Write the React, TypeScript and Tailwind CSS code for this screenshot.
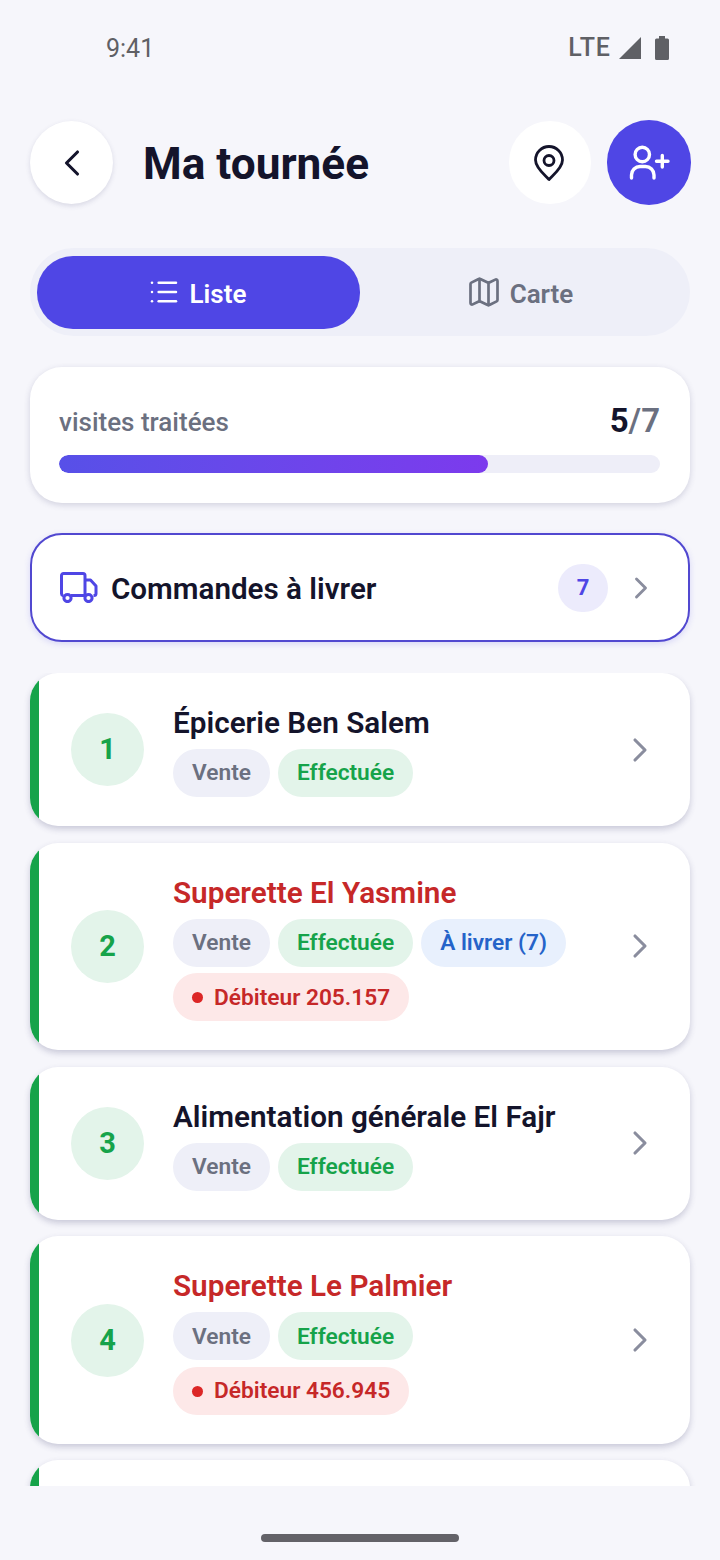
import { ChevronLeft, ChevronRight, List, Map } from "lucide-react";

type Stop = {
  num: number;
  name: string;
  late?: boolean;
  toDeliver?: number;
  debt?: string;
};

const stops: Stop[] = [
  { num: 1, name: "Épicerie Ben Salem" },
  { num: 2, name: "Superette El Yasmine", late: true, toDeliver: 7, debt: "205.157" },
  { num: 3, name: "Alimentation générale El Fajr" },
  { num: 4, name: "Superette Le Palmier", late: true, debt: "456.945" },
];

function Badge({ className, children }: { className: string; children: React.ReactNode }) {
  return (
    <span className={`flex h-[48px] items-center rounded-full px-[19px] pt-[1px] text-[22.7px] font-semibold ${className}`}>
      {children}
    </span>
  );
}

function StopCard({ stop }: { stop: Stop }) {
  return (
    <div className="flex shrink-0 overflow-hidden rounded-[28px] bg-white shadow-[0_3px_6px_rgba(60,60,110,0.24)]">
      <div className="w-[9px] shrink-0 bg-[#16a34a]" />
      <div className="flex min-w-0 flex-1 items-center pl-[32px] pr-[30px]">
        <div className="flex h-[73px] w-[73px] shrink-0 items-center justify-center rounded-full bg-[#e3f4ea] pt-[1px] text-[29px] font-bold text-[#16a34a]">
          {stop.num}
        </div>
        <div className="min-w-0 flex-1 pb-[29px] pl-[29px] pt-[32px]">
          <div className={`h-[44px] text-[29.7px] leading-[36px] font-semibold ${stop.late ? "text-[#c62828]" : "text-[#14142b]"}`}>
            {stop.name}
          </div>
          <div className="flex flex-wrap gap-x-[8px] gap-y-[6.5px]">
            <Badge className="bg-[#eeeff8] text-[#6b7080]">Vente</Badge>
            <Badge className="bg-[#e3f4ea] text-[#16a34a]">Effectuée</Badge>
            {stop.toDeliver ? (
              <Badge className="bg-[#e8f0fd] text-[#2563c9]">À livrer ({stop.toDeliver})</Badge>
            ) : null}
            {stop.debt ? (
              <Badge className="bg-[#fde8e8] text-[#c62828]">
                <span className="mr-[11px] h-[11px] w-[11px] rounded-full bg-[#dc2626]" />
                Débiteur {stop.debt}
              </Badge>
            ) : null}
          </div>
        </div>
        <ChevronRight className="h-[40px] w-[40px] shrink-0 text-[#8a8d9e]" strokeWidth={1.9} />
      </div>
    </div>
  );
}

export default function App() {
  return (
    <div className="flex h-[1560px] w-[720px] flex-col overflow-hidden bg-[#f6f6fb] font-['Roboto',sans-serif]">
      <div className="flex h-[96px] items-center justify-between pl-[106px] pr-[51px] text-[#5f6065]">
        <span className="pt-[2px] text-[25px]">9:41</span>
        <div className="flex items-center">
          <span className="text-[25px] font-medium tracking-[1px]">LTE</span>
          <svg className="ml-[8px] h-[22px] w-[22px]" viewBox="0 0 24 24" fill="currentColor">
            <path d="M24 0v24H0z" />
          </svg>
          <svg className="ml-[14px] h-[24px] w-[14px]" viewBox="0 0 14 24" fill="currentColor">
            <path d="M4 0h6v2.500h2.500A1.500 1.500 0 0 1 14 4v18.500a1.500 1.500 0 0 1-1.500 1.500h-11A1.500 1.500 0 0 1 0 22.500V4a1.500 1.500 0 0 1 1.500-1.500H4z" />
          </svg>
        </div>
      </div>

      <div className="mt-[24px] flex h-[85px] items-center pl-[30px] pr-[29px]">
        <button className="flex h-[83px] w-[83px] items-center justify-center rounded-full bg-white shadow-[0_2px_5px_rgba(60,60,110,0.16)]">
          <ChevronLeft className="h-[44px] w-[44px] text-[#14142b]" strokeWidth={1.7} />
        </button>
        <h1 className="ml-[30px] flex-1 pt-[3px] text-[44.2px] font-bold text-[#14142b]">Ma tournée</h1>
        <button className="flex h-[83px] w-[82px] items-center justify-center rounded-full bg-white">
          <svg className="mr-[2px] h-[36px] w-[30px] text-[#14142b]" viewBox="0 0 30 36" fill="none" stroke="currentColor" strokeWidth="2.8" strokeLinejoin="round">
            <path d="M15 34.500C11 30 1.500 23 1.500 15A13.500 13.500 0 0 1 28.500 15C28.500 23 19 30 15 34.500Z" />
            <circle cx="15" cy="15.500" r="5" />
          </svg>
        </button>
        <button className="ml-[16px] flex h-[85px] w-[84px] items-center justify-center rounded-full bg-[#4f46e5]">
          <svg className="h-[35px] w-[42px] text-white" viewBox="0 0 42 35" fill="none" stroke="currentColor" strokeWidth="3.4" strokeLinecap="round">
            <circle cx="14.300" cy="9.500" r="7.200" />
            <path d="M3.500 33V30A8.500 8.500 0 0 1 12 21.500H17.500A8.500 8.500 0 0 1 26 30V33" />
            <path d="M34.300 10.500V22M28.500 16.200H40" />
          </svg>
        </button>
      </div>

      <div className="mx-[30px] mt-[43px] flex h-[88px] items-center rounded-full bg-[#eeeff8] px-[7px]">
        <div className="flex h-[73px] w-[323px] items-center justify-center gap-[10px] rounded-[36px] bg-[#4f46e5] pr-[3px] text-[26px] font-semibold text-white">
          <List className="h-[32px] w-[32px]" strokeWidth={1.9} />
          <span className="pt-[4px]">Liste</span>
        </div>
        <div className="flex h-[73px] flex-1 items-center justify-center gap-[8px] pr-[4px] text-[26px] font-semibold text-[#6b7080]">
          <Map className="h-[36px] w-[36px]" strokeWidth={1.8} />
          <span className="pt-[4px]">Carte</span>
        </div>
      </div>

      <div className="mx-[30px] mt-[31px] h-[136px] rounded-[32px] bg-white pl-[29px] pr-[30px] pt-[34px] shadow-[0_2px_6px_rgba(60,60,110,0.2)]">
        <div className="flex h-[40px] items-center justify-between">
          <span className="pt-[2px] text-[26px] font-medium text-[#6b7080]">visites traitées</span>
          <span className="text-[33px] font-bold text-[#14142b]">
            5<span className="font-semibold text-[#6b7080]">/7</span>
          </span>
        </div>
        <div className="mt-[14px] h-[18px] overflow-hidden rounded-full bg-[#eeeef8]">
          <div className="h-full rounded-full bg-gradient-to-r from-[#5750e8] to-[#7c3aed]" style={{ width: `${(5 / 7) * 100}%` }} />
        </div>
      </div>

      <div className="mx-[30px] mt-[30px] flex h-[109px] items-center rounded-[32px] border-2 border-[#5148d0] bg-white pl-[28px] pr-[29px] shadow-[0_2px_6px_rgba(79,70,229,0.18)]">
        <svg className="h-[31px] w-[38px] text-[#4f46e5]" viewBox="0 0 38 31" fill="none" stroke="currentColor" strokeWidth="3" strokeLinejoin="round">
          <path d="M3.500 23.500H3A2 2 0 0 1 1.500 21.500V3.500A2 2 0 0 1 3.500 1.500H23A2 2 0 0 1 25 3.500V23.500H11" />
          <path d="M25 8H30.500L36 14V21.500A2 2 0 0 1 34 23.500H33.500" />
          <circle cx="7.500" cy="26" r="3.600" />
          <circle cx="28.500" cy="26" r="3.600" />
        </svg>
        <span className="ml-[13px] flex-1 pt-[3px] text-[29.6px] font-semibold text-[#14142b]">Commandes à livrer</span>
        <span className="flex h-[48px] w-[50px] items-center justify-center rounded-full bg-[#ecebfc] text-[22px] font-bold text-[#4f46e5]">7</span>
        <ChevronRight className="ml-[15px] h-[36px] w-[36px] text-[#8a8d9e]" strokeWidth={1.9} />
      </div>

      <div className="mt-[31px] flex h-[813px] flex-col gap-[16.6px] overflow-hidden px-[30px]">
        {stops.map((stop) => (
          <StopCard key={stop.num} stop={stop} />
        ))}
        <div className="flex h-[100px] shrink-0 overflow-hidden rounded-[28px] bg-white shadow-[0_3px_6px_rgba(60,60,110,0.24)]">
          <div className="w-[9px] bg-[#16a34a]" />
        </div>
      </div>

      <div className="flex flex-1 items-center justify-center pt-[30px]">
        <div className="h-[8px] w-[198px] rounded-full bg-[#636268]" />
      </div>
    </div>
  );
}
